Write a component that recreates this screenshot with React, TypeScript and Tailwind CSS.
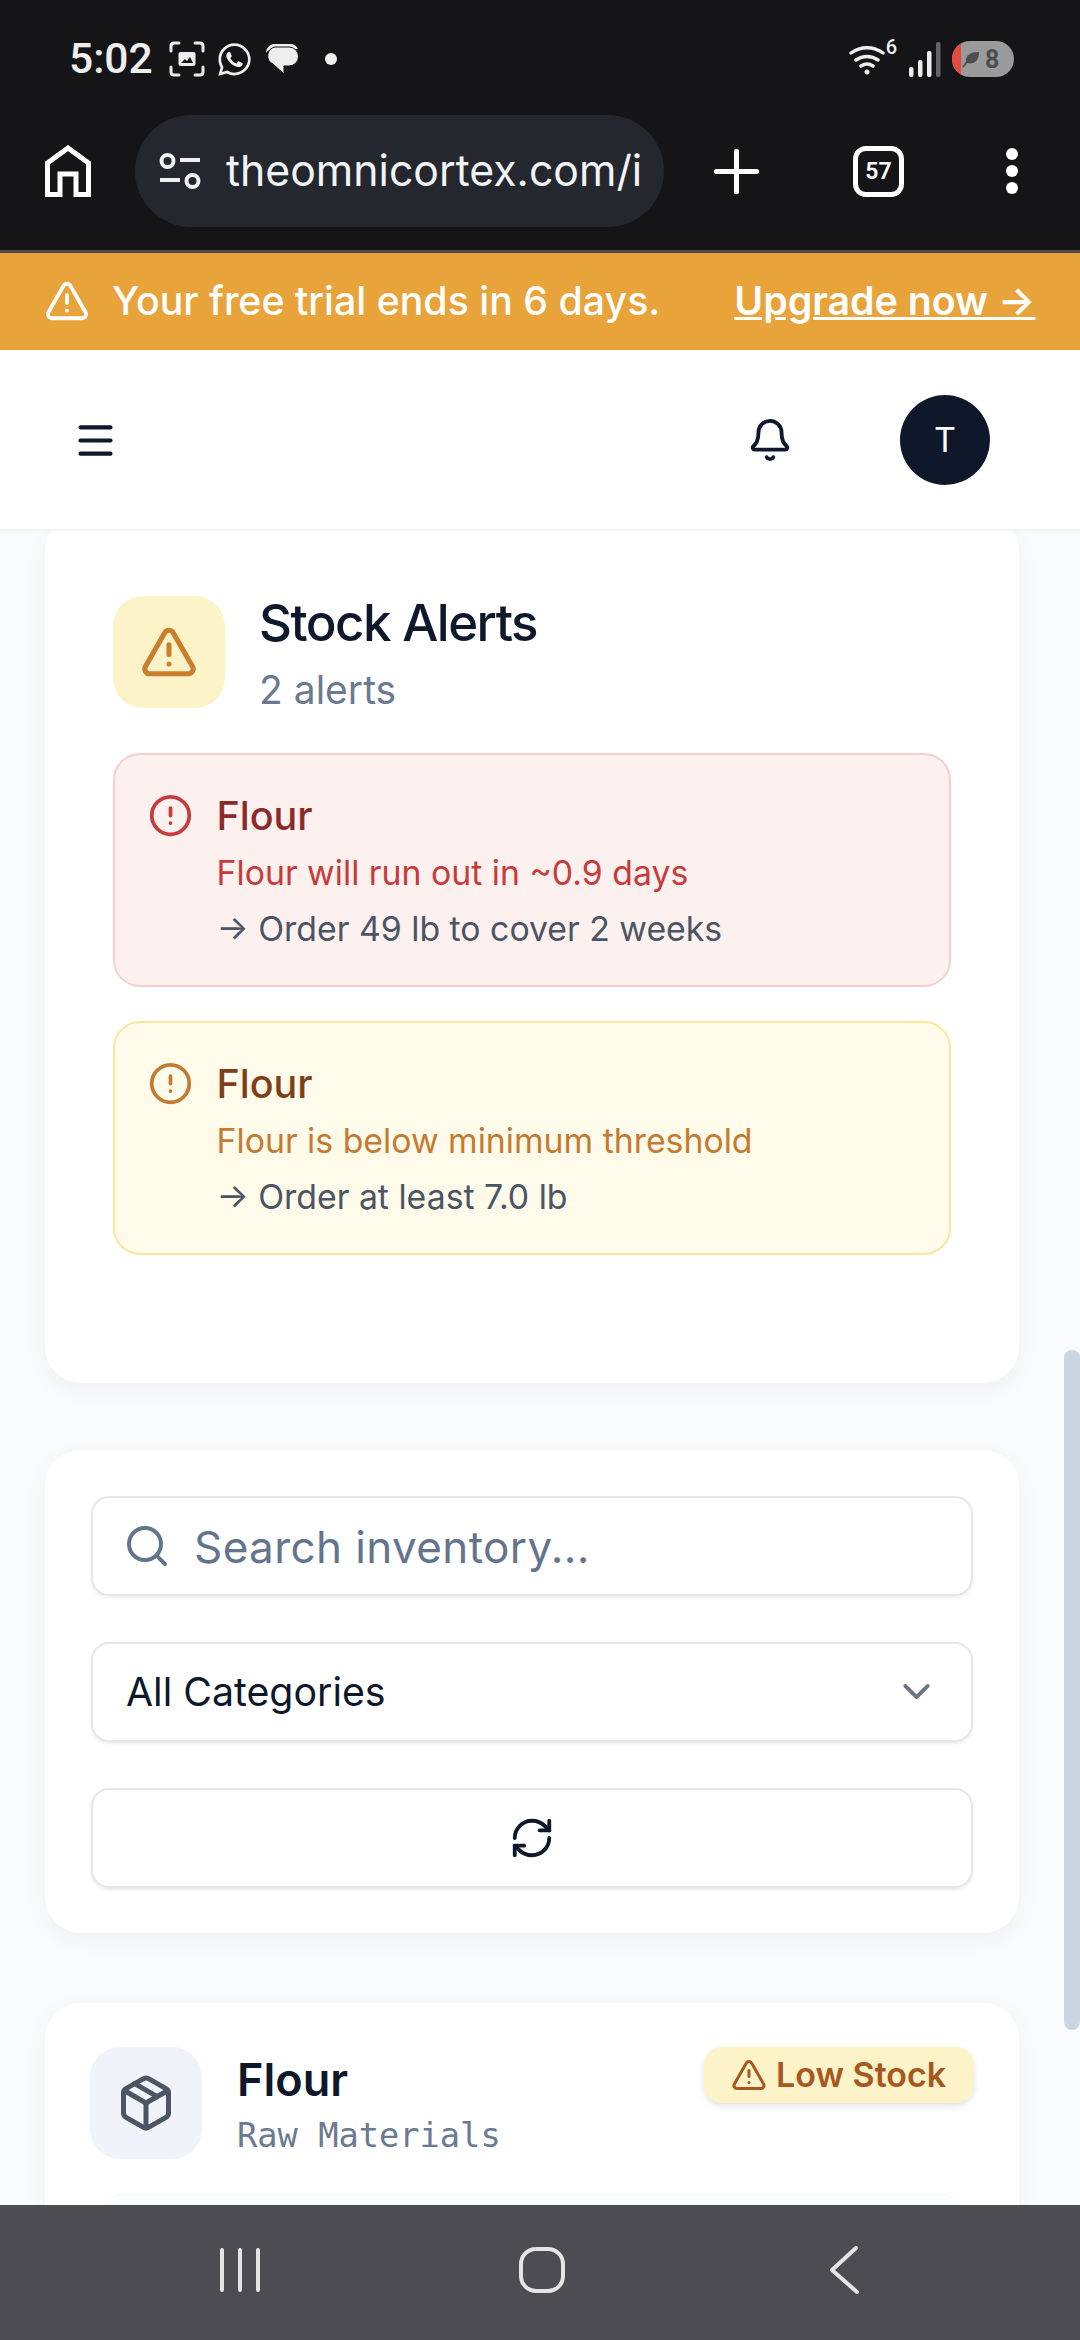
import { TriangleAlert, CircleAlert, Bell, Menu, Search, ChevronDown, RefreshCw, Package, Plus } from "lucide-react";
import { FaWhatsapp } from "react-icons/fa";

function AlertBox({ box, icon, title, msg, message, action }: { box: string; icon: string; title: string; msg: string; message: string; action: string }) {
  return (
    <div className={`h-[234px] rounded-[27px] border-[2.5px] pl-[33px] pt-[37px] flex gap-[23.5px] ${box}`}>
      <CircleAlert className={`w-[45px] h-[45px] shrink-0 mt-[1px] ${icon}`} strokeWidth={2} />
      <div className="flex flex-col">
        <div className={`text-[39.5px] leading-[48px] font-medium ${title}`}>Flour</div>
        <div className={`text-[33.8px] leading-[56px] mt-[5px] ${msg}`}>{message}</div>
        <div className="text-[33.8px] leading-[56px] text-[#4b5563]">→ {action}</div>
      </div>
    </div>
  );
}

export default function App() {
  return (
    <div className="w-[1080px] h-[2340px] flex flex-col overflow-hidden bg-[#f8fafc] font-['Inter',sans-serif]">
      {/* Browser chrome */}
      <div className="h-[253px] shrink-0 bg-[#151517] border-b-[3px] border-[#4d4d50] relative z-20 flex flex-col">
        <div className="h-[115px] flex items-center pl-[69px] pr-[66px] pt-[3px] text-[#eeeeee]">
          <span className="font-['Roboto',sans-serif] font-medium text-[42.5px] leading-none w-[84px]">5:02</span>
          <svg className="ml-[16px]" width="36" height="36" viewBox="0 0 36 36" fill="none" stroke="#eee" strokeWidth="3" strokeLinecap="round">
            <path d="M2 10V5q0-3 3-3h5M26 2h5q3 0 3 3v5M34 26v5q0 3-3 3h-5M10 34H5q-3 0-3-3v-5" />
            <rect x="9.5" y="11" width="17" height="14" rx="2" fill="#eee" stroke="none" />
            <path d="M12 22l4-4 2 2 3-4 3 6z" fill="#151517" stroke="none" />
          </svg>
          <FaWhatsapp className="ml-[11px] text-[37px] text-[#eee]" />
          <svg className="ml-[13px]" width="32" height="32" viewBox="0 0 32 32">
            <path d="M7 1h16a9 9 0 0 1 9 5H8a9 9 0 0 0-8 4 9 9 0 0 1 7-9z" fill="#eee" />
            <path d="M9 4h14a9 9 0 0 1 0 19h-5v8L7 21a9 9 0 0 1 2-17z" fill="#eee" stroke="#151517" strokeWidth="1" />
          </svg>
          <span className="ml-[27px] w-[12px] h-[12px] rounded-full bg-[#eee]" />
          <div className="flex-1" />
          <svg width="47" height="36" viewBox="0 0 47 36" fill="none" stroke="#eee" strokeWidth="3.4" strokeLinecap="round">
            <path d="M2 12a27 27 0 0 1 32 0M7 19a19 19 0 0 1 22 0M12 25a11 11 0 0 1 12 0" />
            <circle cx="18" cy="31" r="2.5" fill="#eee" stroke="none" />
          </svg>
          <span className="-ml-[10px] mb-[24px] text-[20px] leading-none font-medium font-['Roboto',sans-serif] text-[#eee]">6</span>
          <svg className="ml-[12px]" width="32" height="36" viewBox="0 0 32 36">
            <rect x="0" y="26" width="4.5" height="10" rx="2" fill="#eee" />
            <rect x="9" y="19" width="4.5" height="17" rx="2" fill="#eee" />
            <rect x="18" y="10" width="4.5" height="26" rx="2" fill="#eee" />
            <rect x="27" y="1" width="4.5" height="35" rx="2" fill="#66666a" />
          </svg>
          <div className="ml-[11px] w-[62px] h-[36px] rounded-full bg-[#9a9a9a] overflow-hidden flex items-center">
            <span className="w-[9px] h-full bg-[#e14a3c] shrink-0" />
            <svg className="ml-[1px]" width="18" height="18" viewBox="0 0 18 18">
              <path d="M4 12C3 5 9 2 17 2c0 8-4 13-12 11z" fill="#4d4d50" />
              <path d="M1 17c3-5 6-7 9-9" stroke="#4d4d50" strokeWidth="1.6" fill="none" />
            </svg>
            <span className="ml-[5px] text-[25px] leading-none font-bold font-['Roboto',sans-serif] text-[#4d4d50]">8</span>
          </div>
        </div>
        <div className="flex items-center pl-[45px] h-[112px]">
          <svg width="46" height="52" viewBox="0 0 46 52" fill="none" stroke="#fff" strokeWidth="5" className="shrink-0">
            <path d="M2.5 49.5V18L23 3l20.5 15v31.500H31V29H15v20.500z" />
          </svg>
          <div className="ml-[44px] w-[529px] h-[112px] rounded-full bg-[#24272e] flex items-center pl-[24px] overflow-hidden shrink-0">
            <svg width="44" height="36" viewBox="0 0 44 36" fill="none" stroke="#eef0f2" strokeWidth="4" className="shrink-0">
              <circle cx="8.500" cy="8" r="6" />
              <path d="M21 7h20M1 27h20" />
              <circle cx="33.500" cy="28" r="6" />
            </svg>
            <span className="ml-[23px] text-[42.750px] leading-none text-[#f1f3f4] whitespace-nowrap">theomnicortex.com/i</span>
          </div>
          <Plus className="ml-[38px] w-[69px] h-[69px] text-white shrink-0" strokeWidth={1.750} />
          <div className="ml-[82px] w-[51px] h-[51px] rounded-[13px] border-[5px] border-white flex items-center justify-center shrink-0">
            <span className="text-[23px] leading-none font-semibold text-white font-['Roboto',sans-serif]">57</span>
          </div>
          <div className="ml-[102px] flex flex-col gap-[5px] shrink-0">
            <span className="w-[12px] h-[12px] rounded-full bg-white" />
            <span className="w-[12px] h-[12px] rounded-full bg-white" />
            <span className="w-[12px] h-[12px] rounded-full bg-white" />
          </div>
        </div>
      </div>

      {/* Trial banner */}
      <div className="h-[97px] shrink-0 bg-[#e8a33a] text-white flex items-center pl-[44px] pb-[2px] relative z-20">
        <TriangleAlert className="w-[46px] h-[46px] shrink-0" strokeWidth={2} />
        <span className="ml-[22px] text-[39.3px] leading-none font-medium whitespace-nowrap">Your free trial ends in 6 days.</span>
        <span className="ml-[74px] text-[39.3px] leading-none font-semibold underline whitespace-nowrap">Upgrade now →</span>
      </div>

      {/* App header */}
      <div className="h-[181px] shrink-0 bg-white border-b-[2px] border-[#f1f3f5] flex items-center relative z-20 pl-[73px] pr-[90px]">
        <Menu className="w-[45px] h-[45px] text-[#0f172a] mt-[2px]" strokeWidth={2.200} />
        <div className="flex-1" />
        <Bell className="w-[46px] h-[46px] text-[#0f172a]" strokeWidth={2} />
        <div className="ml-[107px] w-[90px] h-[90px] rounded-full bg-[#0f172a] text-white text-[34px] flex items-center justify-center">T</div>
      </div>

      {/* Content + scrollbar */}
      <div className="flex-1 min-h-0 flex">
        <div className="flex-1 min-w-0 pl-[45px] pr-[45px] flex flex-col -mt-[15px]">
          <div className="h-[867px] shrink-0 bg-white rounded-[36px] shadow-[0_6px_24px_rgba(15,23,42,0.04)] px-[68px] pt-[80px]">
            <div className="flex gap-[34px]">
              <div className="w-[112px] h-[112px] rounded-[30px] bg-[#fdf3c9] flex items-center justify-center">
                <TriangleAlert className="w-[58px] h-[58px] text-[#c97f2e]" strokeWidth={2.100} />
              </div>
              <div className="flex flex-col">
                <div className="text-[51px] leading-[56px] font-medium text-[#0f172a] tracking-[-1.5px] mt-[-1px]">Stock Alerts</div>
                <div className="text-[39px] leading-[48px] text-[#6b7a90] mt-[15px]">2 alerts</div>
              </div>
            </div>
            <div className="flex flex-col gap-[34px] mt-[39px]">
              <AlertBox box="bg-[#fdf1f0] border-[#f5cfd0]" icon="text-[#c93a3a]" title="text-[#8c2a2a]" msg="text-[#c93a3a]" message="Flour will run out in ~0.9 days" action="Order 49 lb to cover 2 weeks" />
              <AlertBox box="bg-[#fffbeb] border-[#fae59a]" icon="text-[#c47a30]" title="text-[#7f3f1a]" msg="text-[#c47a30]" message="Flour is below minimum threshold" action="Order at least 7.0 lb" />
            </div>
          </div>

          <div className="h-[483px] shrink-0 mt-[67px] bg-white rounded-[36px] shadow-[0_6px_24px_rgba(15,23,42,0.04)] px-[46px] pt-[46px] flex flex-col gap-[46px]">
            <div className="h-[100px] rounded-[18px] border-2 border-[#e5e7eb] shadow-[0_2px_3px_rgba(15,23,42,0.08)] flex items-center pl-[30px]">
              <Search className="w-[48px] h-[48px] text-[#64748b]" strokeWidth={2} />
              <span className="ml-[23px] mt-[2px] text-[44px] leading-none text-[#64748b] tracking-[0.4px]">Search inventory...</span>
            </div>
            <div className="h-[100px] rounded-[18px] border-2 border-[#e5e7eb] shadow-[0_2px_3px_rgba(15,23,42,0.08)] flex items-center justify-between pl-[33px] pr-[32px] pb-[1px]">
              <span className="text-[39.3px] leading-none text-[#0f172a]">All Categories</span>
              <ChevronDown className="w-[45px] h-[45px] text-[#6b7280]" strokeWidth={2} />
            </div>
            <div className="h-[100px] rounded-[18px] border-2 border-[#e5e7eb] shadow-[0_2px_3px_rgba(15,23,42,0.08)] flex items-center justify-center">
              <RefreshCw className="w-[46px] h-[46px] text-[#0f172a]" strokeWidth={2} />
            </div>
          </div>

          <div className="h-[400px] shrink-0 mt-[70px] bg-white rounded-[36px] shadow-[0_6px_24px_rgba(15,23,42,0.04)] px-[45px] pt-[44px]">
            <div className="flex items-start">
              <div className="w-[112px] h-[112px] rounded-[30px] bg-[#f0f4fa] flex items-center justify-center shrink-0">
                <Package className="w-[60px] h-[60px] text-[#4b5563]" strokeWidth={2} />
              </div>
              <div className="ml-[35px] flex flex-col flex-1">
                <div className="text-[45px] leading-[56px] font-semibold text-[#0f172a] mt-[5px]">Flour</div>
                <div className="text-[33.7px] leading-[40px] text-[#6b7a90] mt-[8px] font-['DejaVu_Sans_Mono',monospace]">Raw Materials</div>
              </div>
              <div className="h-[56px] w-[270px] rounded-[18px] bg-[#fdf3c9] shadow-[0_3px_6px_rgba(15,23,42,0.12)] flex items-center pl-[27px] text-[#a85720] shrink-0">
                <TriangleAlert className="w-[36px] h-[36px]" strokeWidth={2} />
                <span className="ml-[9px] text-[34px] leading-none font-semibold">Low Stock</span>
              </div>
            </div>
            <div className="h-[60px] mt-[34px] mx-[10px] rounded-t-[24px] bg-[#f9fbfd]" />
          </div>
        </div>
        <div className="w-[16px] shrink-0 bg-[#f8fafc]">
          <div className="w-full h-[680px] mt-[819px] rounded-t-full rounded-b-full bg-[#cbd5e1]" />
        </div>
      </div>

      {/* Android navigation bar */}
      <div className="h-[135px] shrink-0 bg-[#4d4d51] relative z-20 flex items-center pl-[219px] pb-[6px]">
        <svg width="42" height="44" viewBox="0 0 42 44" stroke="#e5e5e6" strokeWidth="4" strokeLinecap="round">
          <path d="M3 2v40M21 2v40M39 2v40" />
        </svg>
        <svg className="ml-[258px]" width="46" height="46" viewBox="0 0 46 46" fill="none" stroke="#e5e5e6" strokeWidth="4">
          <rect x="2" y="2" width="42" height="42" rx="15" />
        </svg>
        <svg className="ml-[264px]" width="32" height="48" viewBox="0 0 32 48" fill="none" stroke="#e5e5e6" strokeWidth="4" strokeLinecap="round" strokeLinejoin="round">
          <path d="M27 2L3 24l25 22" />
        </svg>
      </div>
    </div>
  );
}
